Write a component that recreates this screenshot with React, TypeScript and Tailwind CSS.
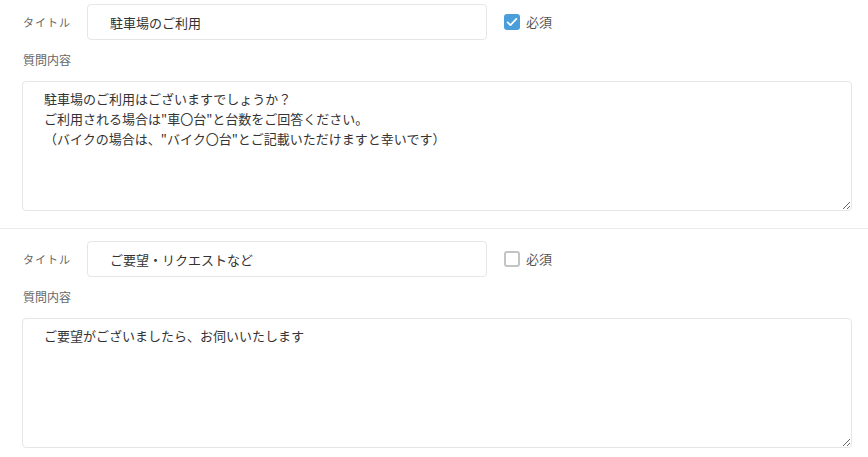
import { useState } from 'react';

interface Question {
  title: string;
  body: string;
  required: boolean;
}

const initial: Question[] = [
  {
    title: '駐車場のご利用',
    body: '駐車場のご利用はございますでしょうか？\nご利用される場合は"車〇台"と台数をご回答ください。\n（バイクの場合は、"バイク〇台"とご記載いただけますと幸いです）',
    required: true,
  },
  {
    title: 'ご要望・リクエストなど',
    body: 'ご要望がございましたら、お伺いいたします',
    required: false,
  },
];

function Check({ checked, onClick }: { checked: boolean; onClick: () => void }) {
  return (
    <button
      type="button"
      onClick={onClick}
      className={
        checked
          ? 'w-[16px] h-[16px] rounded-[3px] bg-[#4a9fdb] flex items-center justify-center'
          : 'w-[16px] h-[16px] rounded-[3px] border-2 border-[#c4c4c4] bg-white'
      }
    >
      {checked && (
        <svg viewBox="0 0 16 16" className="w-[14px] h-[14px]">
          <path d="M3 8.5l3.2 3L13 4.5" fill="none" stroke="white" strokeWidth="2" strokeLinecap="round" strokeLinejoin="round" />
        </svg>
      )}
    </button>
  );
}

export default function App() {
  const [items, setItems] = useState<Question[]>(initial);

  const update = (i: number, patch: Partial<Question>) => {
    setItems(prev => prev.map((q, idx) => (idx === i ? { ...q, ...patch } : q)));
  };

  return (
    <div
      className="bg-white min-h-screen text-[#333]"
      style={{ fontFamily: '"Noto Sans CJK JP", "Noto Sans", sans-serif' }}
    >
      {items.map((q, i) => (
        <div
          key={i}
          className={`px-[22px] pb-[17px] border-b border-[#ebebeb] ${i === 0 ? 'pt-[4px]' : 'pt-[12px]'}`}
        >
          <div className="flex items-center">
            <label className="w-[65px] pl-[1px] text-[11px] text-[#666] tracking-[1px]">タイトル</label>
            <input
              type="text"
              value={q.title}
              onChange={e => update(i, { title: e.target.value })}
              className="w-[400px] h-[36px] border border-[#e6e6e6] rounded-[4px] pl-[22px] text-[13px] text-[#333] outline-none"
            />
            <div className="flex items-center gap-[6px] ml-[17px]">
              <Check checked={q.required} onClick={() => update(i, { required: !q.required })} />
              <span className="text-[13px] text-[#555]">必須</span>
            </div>
          </div>
          <div className="mt-[10px] pl-[1px] text-[12px] leading-[20px] text-[#666]">質問内容</div>
          <textarea
            value={q.body}
            onChange={e => update(i, { body: e.target.value })}
            className="mt-[11px] block w-[830px] h-[130px] border border-[#e6e6e6] rounded-[4px] pl-[21px] pr-3 pt-[7px] text-[13px] leading-[20px] text-[#333] outline-none"
          />
        </div>
      ))}
    </div>
  );
}
